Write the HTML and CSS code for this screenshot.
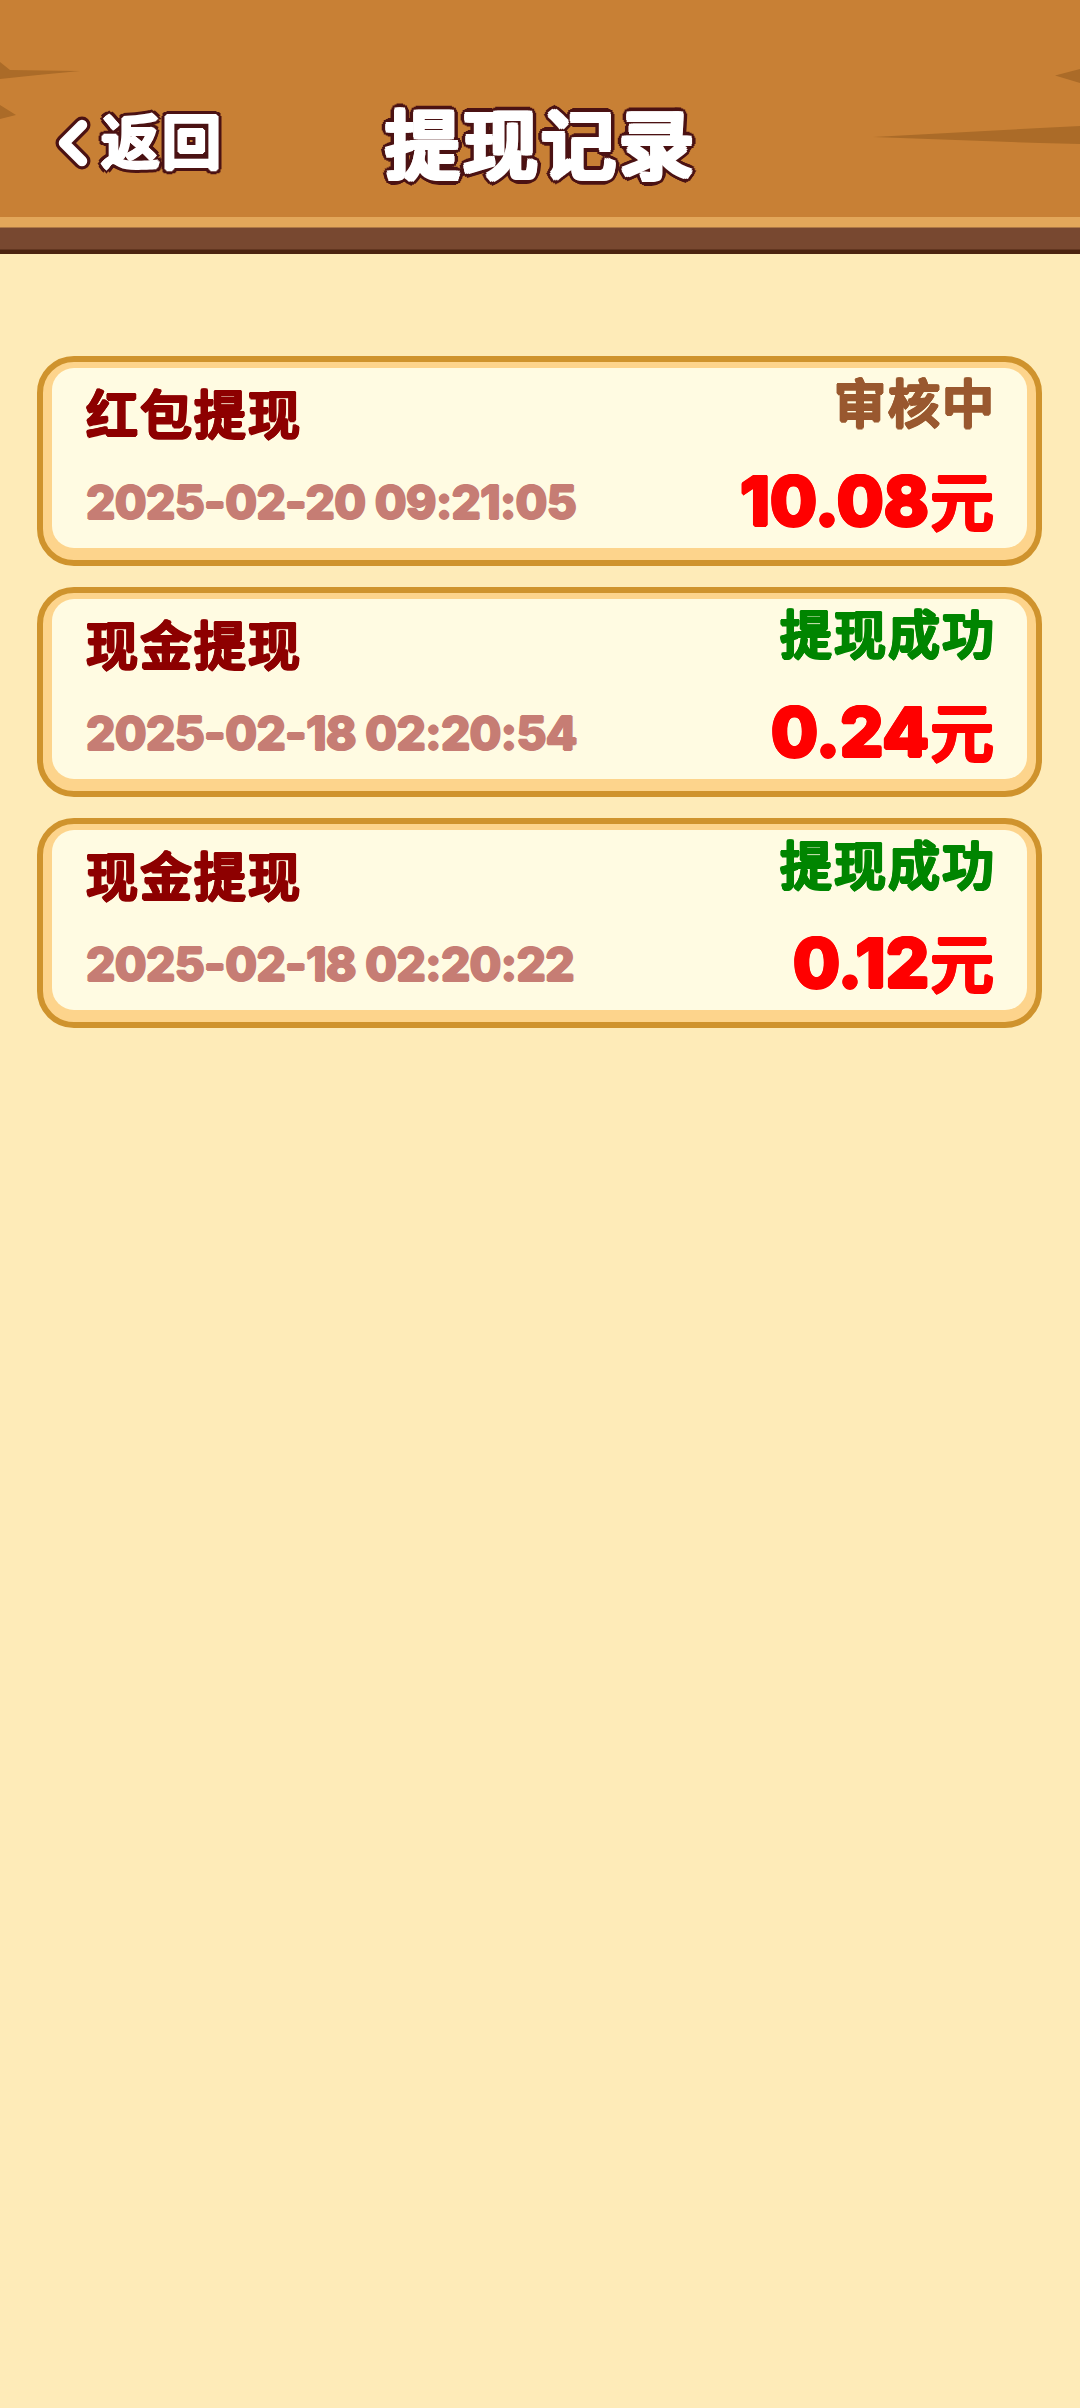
FILE: index.html
```html
<!DOCTYPE html>
<html lang="zh-CN">
<head>
<meta charset="utf-8">
<title>提现记录</title>
<link rel="stylesheet" href="styles.css">
</head>
<body>
<header class="header">
  <svg class="grain" viewBox="0 0 1080 217" aria-hidden="true">
    <path d="M0 62 L10 70 L80 71 L38 75 L0 79Z M0 105 L16 115 L0 119Z M1080 69 L1055 75.500 L1080 83Z M1080 126 L1040 128 L873 137 L1040 143 L1080 144Z"/>
  </svg>
  <a class="back">
    <svg class="chevron" viewBox="0 0 38 56" aria-hidden="true">
      <path class="chevron-edge" d="M29 10 L11 28 L29 46"/>
      <path class="chevron-fill" d="M29 10 L11 28 L29 46"/>
    </svg>
    <span class="back-label">返回</span>
  </a>
  <h1 class="title">提现记录</h1>
</header>
<main class="records">
  <article class="card">
    <div class="panel">
      <div class="info"><h2 class="kind">红包提现</h2><time class="date">2025-02-20 09:21:05</time></div>
      <div class="result"><span class="status pending">审核中</span><span class="amount"><span class="number">10.08</span>元</span></div>
    </div>
  </article>
  <article class="card">
    <div class="panel">
      <div class="info"><h2 class="kind">现金提现</h2><time class="date">2025-02-18 02:20:54</time></div>
      <div class="result"><span class="status success">提现成功</span><span class="amount"><span class="number">0.24</span>元</span></div>
    </div>
  </article>
  <article class="card">
    <div class="panel">
      <div class="info"><h2 class="kind">现金提现</h2><time class="date">2025-02-18 02:20:22</time></div>
      <div class="result"><span class="status success">提现成功</span><span class="amount"><span class="number">0.12</span>元</span></div>
    </div>
  </article>
</main>
</body>
</html>
```
FILE: styles.css
```css
* { box-sizing: border-box; }

body {
  margin: 0;
  min-height: 2408px;
  background: #feebb8;
  font-family: "Noto Sans CJK SC", sans-serif;
  font-weight: 500;
}

h1, h2 { margin: 0; font-weight: inherit; }

.header {
  position: relative;
  display: grid;
  grid-template-columns: 1fr auto 1fr;
  align-items: center;
  height: 254px;
  padding: 69px 51px 41px 53px;
  background: linear-gradient(#c88035 217px, #e3a75a 217px 227px, #784830 228px 249px, #4c2410 250px);
}

.grain {
  position: absolute;
  top: 0;
  left: 0;
  width: 1080px;
  height: 217px;
  fill: #ab6b28;
}

.back, .title { position: relative; color: #fff; }

.back { display: flex; align-items: center; }

.chevron { width: 38px; height: 56px; margin-top: 3px; }
.chevron path { fill: none; stroke-linecap: round; stroke-linejoin: round; }
.chevron-edge { stroke: #4b1213; stroke-width: 17; }
.chevron-fill { stroke: #fff; stroke-width: 10.5; }

.back-label {
  margin: -4px 0 0 10px;
  font-size: 59px;
  letter-spacing: 2px;
  line-height: 80px;
  text-shadow:
    2px 0 #fff, -2px 0 #fff, 0 2px #fff, 0 -2px #fff,
    1px 1px #fff, -1px 1px #fff, 1px -1px #fff, -1px -1px #fff,
    5px 0 #4b1213, -5px 0 #4b1213, 0 5px #4b1213, 0 -5px #4b1213,
    4px 3px #4b1213, -4px 3px #4b1213, 4px -3px #4b1213, -4px -3px #4b1213,
    3px 4px #4b1213, -3px 4px #4b1213, 3px -4px #4b1213, -3px -4px #4b1213;
}

.title {
  font-size: 75px;
  letter-spacing: 3px;
  line-height: 100px;
  text-shadow:
    2.5px 0 #fff, -2.5px 0 #fff, 0 2px #fff, 0 -2px #fff,
    2px 2px #fff, -2px 2px #fff, 2px -2px #fff, -2px -2px #fff,
    6px 0 #4b1213, -6px 0 #4b1213, 0 6px #4b1213, 0 -6px #4b1213,
    4px 4px #4b1213, -4px 4px #4b1213, 4px -4px #4b1213, -4px -4px #4b1213,
    5px 2px #4b1213, -5px 2px #4b1213, 5px -2px #4b1213, -5px -2px #4b1213,
    2px 5px #4b1213, -2px 5px #4b1213, 2px -5px #4b1213, -2px -5px #4b1213;
}

.records {
  display: flex;
  flex-direction: column;
  gap: 21px;
  padding: 102px 38px 0 37px;
}

.card {
  height: 210px;
  padding: 6px 9px 12px;
  border: 6px solid #cf932d;
  border-radius: 37px;
  background: #fdd48c;
}

.panel {
  display: flex;
  justify-content: space-between;
  height: 100%;
  padding: 0 33px 0 34px;
  border-radius: 22px;
  background: #fffbe2;
}

.info, .result {
  display: flex;
  flex-direction: column;
  white-space: nowrap;
}

.kind, .status, .amount {
  text-shadow:
    1.5px 0 currentColor, -1.5px 0 currentColor,
    0 1.5px currentColor, 0 -1.5px currentColor,
    1px 1px currentColor, -1px 1px currentColor,
    1px -1px currentColor, -1px -1px currentColor;
}

.info { padding-top: 8px; }

.kind {
  color: #8d0000;
  font-size: 52px;
  letter-spacing: 2px;
  line-height: 72px;
}

.date {
  margin-top: 18px;
  color: #c67d74;
  font-family: Inter, sans-serif;
  font-size: 46px;
  font-weight: 800;
  letter-spacing: -0.6px;
  line-height: 72px;
  text-shadow:
    1px 0 currentColor, -1px 0 currentColor,
    0 1px currentColor, 0 -1px currentColor;
}

.result { align-items: flex-end; }

.status {
  margin-top: -3px;
  margin-right: -2px;
  font-size: 52px;
  letter-spacing: 2px;
  line-height: 72px;
}

.pending { color: #99582f; }
.success { color: #008500; }

.amount {
  margin-top: 15px;
  color: #f00;
  font-size: 64px;
  line-height: 90px;
}

.number {
  margin-right: 1px;
  font-family: Inter, sans-serif;
  font-size: 68px;
  font-weight: 800;
}
```
